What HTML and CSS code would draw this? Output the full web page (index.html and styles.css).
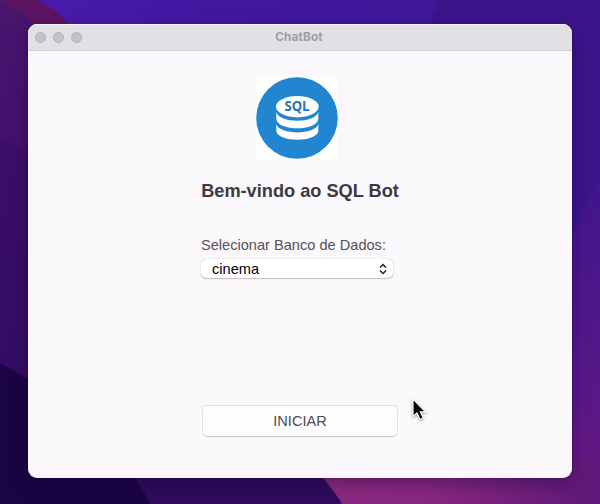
FILE: index.html
```html
<!DOCTYPE html>
<html lang="pt-BR">
<head>
<meta charset="utf-8">
<title>ChatBot</title>
<link rel="stylesheet" href="styles.css">
</head>
<body>
<svg class="wallpaper" viewBox="0 0 600 504" aria-hidden="true">
  <defs>
    <linearGradient id="top" x1="0" x2="1" y1="0" y2="0"><stop offset="0" stop-color="#4a1cae"/><stop offset=".35" stop-color="#42179f"/><stop offset="1" stop-color="#3c1792"/></linearGradient>
    <linearGradient id="left" x1="0" x2="0" y1="0" y2="1"><stop offset="0" stop-color="#48156f"/><stop offset="1" stop-color="#42106a"/></linearGradient>
    <linearGradient id="left2" x1="0" x2="0" y1="0" y2="1"><stop offset="0" stop-color="#3c0e68"/><stop offset="1" stop-color="#310d63"/></linearGradient>
    <linearGradient id="right" x1="0" x2="0" y1="0" y2="1"><stop offset="0" stop-color="#40158c"/><stop offset=".55" stop-color="#541889"/><stop offset="1" stop-color="#68177f"/></linearGradient>
    <linearGradient id="pink" x1="0" x2="1" y1="0" y2="0"><stop offset="0" stop-color="#8b2b7f"/><stop offset=".4" stop-color="#88277f"/><stop offset="1" stop-color="#5d1879"/></linearGradient>
  </defs>
  <path fill="url(#top)" d="M0 0h600v504H0z"/>
  <path fill="#3c148a" d="M437 0h163v230H430V24z"/>
  <path fill="#5c1462" d="M0 0h38Q57 9 70 26v40H0z"/>
  <path fill="url(#left)" d="M0 0Q28 13 42 36v140H0z"/>
  <path fill="url(#left2)" d="M0 141l40 10v260H0z"/>
  <path fill="url(#right)" d="M600 178Q574 218 560 270v234h40z"/>
  <path fill="#1b0444" d="M0 363l160 90v51H0z"/>
  <path fill="#300b5c" d="M118 450h222v54H151z"/>
  <path fill="url(#pink)" d="M310 460h290v44H343z"/>
</svg>
<div class="window">
  <header class="titlebar">
    <div class="lights"><span></span><span></span><span></span></div>
    <div class="title">ChatBot</div>
  </header>
  <main class="content">
    <svg class="logo" viewBox="0 0 82 82" role="img">
      <path fill="#fdfdfe" d="M0 0h82v82H0z"/>
      <circle cx="41" cy="41" r="40.8" fill="#2185d0"/>
      <g fill="#fdfdfe">
        <ellipse cx="41.300" cy="29.700" rx="21.300" ry="10.700"/>
        <path d="M20.300 35C23 46.600 59.600 46.600 62.300 35V42C61 54.400 21.600 54.400 20.300 42Z"/>
        <path d="M20.300 47C23 58.200 59.600 58.200 62.300 47V54C61 65.600 21.600 65.600 20.300 54Z"/>
      </g>
      <text class="logo-text" x="41" y="34.300" text-anchor="middle" textLength="25" lengthAdjust="spacingAndGlyphs">SQL</text>
    </svg>
    <h1 class="heading">Bem-vindo ao SQL Bot</h1>
    <div class="field">
      <div class="label">Selecionar Banco de Dados:</div>
      <div class="select">
        <span>cinema</span>
        <svg class="arrows" viewBox="0 0 8 12"><path d="M1 4.500L4 1.500 7 4.500M1 7.500L4 10.500 7 7.500"/></svg>
      </div>
    </div>
    <button class="start" type="button">INICIAR</button>
  </main>
</div>
<svg class="cursor" viewBox="0 0 18 26" aria-hidden="true"><path d="M2 2V19.500L6 16 9 22.500 12.200 21 9.400 14.800H14.500Z"/></svg>
</body>
</html>
```
FILE: styles.css
```css
* { box-sizing: border-box; }
body {
  margin: 0;
  width: 600px;
  height: 504px;
  padding: 24px 28px 26px;
  overflow: hidden;
  position: relative;
  font-family: "Liberation Sans", Arial, sans-serif;
}
.wallpaper { position: absolute; inset: 0; width: 600px; height: 504px; }
.window {
  position: relative;
  width: 544px;
  height: 454px;
  border-radius: 9px;
  overflow: hidden;
  background: #faf8fb;
  box-shadow: 0 0 1px rgba(0, 0, 0, .6), 0 6px 16px rgba(15, 0, 45, .34);
}
.titlebar {
  height: 27px;
  display: grid;
  grid-template-columns: 80px 1fr 80px;
  align-items: center;
  background: #e2dfe5;
  border-top: 1px solid #f6f4f8;
  border-bottom: 1px solid #d4d1d7;
}
.lights { display: flex; gap: 7px; padding-left: 7px; }
.lights span {
  width: 11px;
  height: 11px;
  border-radius: 50%;
  background: #c5c1c8;
  border: 1px solid #b3afb6;
}
.title {
  position: relative;
  top: -1px;
  left: -1px;
  text-align: center;
  font: 700 11.7px/24px Inter, sans-serif;
  color: #a09da4;
  letter-spacing: .2px;
}
.content {
  height: 427px;
  padding-top: 26px;
  display: flex;
  flex-direction: column;
  align-items: center;
}
.logo { width: 82px; height: 82px; margin-right: 6px; flex: none; }
.logo-text { font: 700 13.6px "Open Sans", sans-serif; fill: #2674b8; }
.heading {
  margin: 20px 0 0;
  font-size: 18.2px;
  line-height: 24px;
  color: #3c3b3e;
  white-space: nowrap;
}
.field { width: 198px; margin-top: 32px; }
.label { font-size: 14.6px; line-height: 20px; color: #555357; white-space: nowrap; }
.select {
  width: 192px;
  height: 19px;
  margin-top: 4px;
  padding: 0 6px 0 11px;
  display: flex;
  align-items: center;
  justify-content: space-between;
  background: #fff;
  border-radius: 5px;
  box-shadow: 0 0 1px rgba(0, 0, 0, .35), 0 1px 1px rgba(0, 0, 0, .2);
  font-size: 14.6px;
  color: #000;
}
.arrows { width: 8px; height: 12px; fill: none; stroke: #222; stroke-width: 1.5; }
.start {
  width: 196px;
  height: 32px;
  margin-top: 127px;
  padding: 0 0 1px;
  border: 1px solid #e3e1e5;
  border-bottom-color: #cac8cd;
  border-radius: 5px;
  background: #fdfcfe;
  font: 14.6px "Liberation Sans", Arial, sans-serif;
  color: #4d4b50;
}
.cursor {
  position: absolute;
  left: 411px;
  top: 397px;
  width: 18px;
  height: 26px;
  fill: #000;
  stroke: #fff;
  stroke-width: 1.2;
  filter: drop-shadow(0 1px 1px rgba(0, 0, 0, .4));
}
```
